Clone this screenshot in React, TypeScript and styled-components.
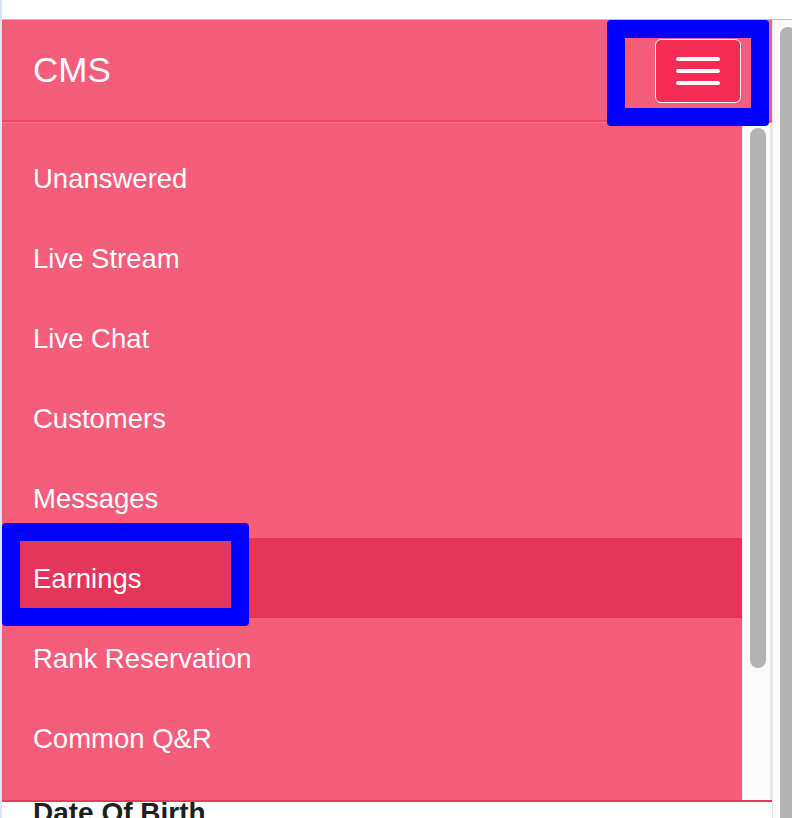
import React, { FC } from 'react'
import styled, { createGlobalStyle } from 'styled-components'

const GlobalStyle = createGlobalStyle`
  html,
  body {
    margin: 0;
    padding: 0;
    overflow: hidden;
    background-color: #fff;
  }

  * {
    box-sizing: border-box;
  }
`

const StylePage = styled.div`
  position: relative;
  display: flex;
  flex-direction: column;
  width: 792px;
  height: 818px;
  overflow: hidden;
  border-left: 2px solid #dce7f0;
  font-family: 'Liberation Sans', Arial, sans-serif;
`

const StyleTopStrip = styled.div`
  flex: none;
  height: 20px;
  background-color: #fff;
  border-bottom: 1px solid #b9c4ce;
`

const StyleBody = styled.div`
  display: flex;
  flex-direction: row;
  flex: 1;
  min-height: 0;
`

const StyleMain = styled.div`
  display: flex;
  flex-direction: column;
  width: 770px;
  flex: none;
`

const StyleHeader = styled.header`
  display: flex;
  flex-direction: row;
  flex: none;
  justify-content: space-between;
  align-items: center;
  height: 102px;
  padding: 0 31px 0 31px;
  background-color: #f55d7b;
  border-bottom: 2px solid #f2436a;
`

const StyleBrand = styled.div`
  margin-top: -1px;
  color: #fff;
  font-size: 35px;
  line-height: 1;
`

const StyleToggler = styled.button`
  display: flex;
  flex-direction: column;
  justify-content: center;
  align-items: center;
  gap: 8px;
  width: 86px;
  height: 64px;
  margin-top: 2px;
  padding: 0;
  background-color: #f42b55;
  border: 1.5px solid #fff;
  border-radius: 6px;
  cursor: pointer;
`

const StyleTogglerBar = styled.span`
  display: block;
  width: 44px;
  height: 4px;
  border-radius: 2px;
  background-color: #fff;
`

const StyleCollapse = styled.div`
  display: flex;
  flex-direction: row;
  flex: none;
  height: 680px;
  background-color: #f55d7b;
  border-top: 1px solid #f8728e;
  border-bottom: 2px solid #f0375d;
`

const StyleMenu = styled.ul`
  flex: 1;
  margin: 0;
  padding: 15px 0 0;
  list-style: none;
`

const StyleMenuItem = styled.li<{ $active?: boolean }>`
  display: flex;
  align-items: center;
  height: 80px;
  padding: 1px 0 0 31px;
  background-color: ${({ $active }) => ($active ? '#e5355a' : 'transparent')};
  color: #fff;
  font-size: 27.5px;
  line-height: 78px;
  white-space: nowrap;
`

const StyleInnerTrack = styled.div`
  flex: none;
  width: 30px;
  padding: 5px 4px 0 7px;
  background-color: #fafafa;
  border-left: 1px solid #ededed;
  border-right: 2px solid #e6e6e6;
`

const StyleInnerThumb = styled.div`
  width: 16px;
  height: 540px;
  border-radius: 8px;
  background-color: #b3b3b3;
`

const StyleContent = styled.div`
  flex: none;
  padding: 1px 0 0 31px;
  background-color: #fff;
`

const StyleLabel = styled.div`
  color: #1f1f1f;
  font-size: 28px;
  font-weight: 700;
  line-height: 20px;
`

const StyleOuterTrack = styled.div`
  flex: none;
  width: 20px;
  padding: 7px 0 0 7px;
  overflow: hidden;
  background-color: #fafafa;
  border-left: 1px solid #e8e8e8;
`

const StyleOuterThumb = styled.div`
  width: 16px;
  height: 900px;
  border-radius: 8px;
  background-color: #b3b3b3;
`

const StyleMark = styled.div<{ $left: number; $top: number; $width: number; $height: number }>`
  position: absolute;
  left: ${({ $left }) => $left}px;
  top: ${({ $top }) => $top}px;
  width: ${({ $width }) => $width}px;
  height: ${({ $height }) => $height}px;
  border: 18px solid #0000ff;
  border-radius: 4px;
  pointer-events: none;
`

const menuItems = [
  'Unanswered',
  'Live Stream',
  'Live Chat',
  'Customers',
  'Messages',
  'Earnings',
  'Rank Reservation',
  'Common Q&R',
]

const App: FC = () => {
  return (
    <>
      <GlobalStyle />
      <StylePage>
        <StyleTopStrip />
        <StyleBody>
          <StyleMain>
            <StyleHeader>
              <StyleBrand>CMS</StyleBrand>
              <StyleToggler aria-label="Toggle navigation">
                <StyleTogglerBar />
                <StyleTogglerBar />
                <StyleTogglerBar />
              </StyleToggler>
            </StyleHeader>
            <StyleCollapse>
              <StyleMenu>
                {menuItems.map((item) => (
                  <StyleMenuItem key={item} $active={item === 'Earnings'}>
                    {item}
                  </StyleMenuItem>
                ))}
              </StyleMenu>
              <StyleInnerTrack>
                <StyleInnerThumb />
              </StyleInnerTrack>
            </StyleCollapse>
            <StyleContent>
              <StyleLabel>Date Of Birth</StyleLabel>
            </StyleContent>
          </StyleMain>
          <StyleOuterTrack>
            <StyleOuterThumb />
          </StyleOuterTrack>
        </StyleBody>
        <StyleMark $left={605} $top={20} $width={162} $height={106} />
        <StyleMark $left={0} $top={523} $width={247} $height={103} />
      </StylePage>
    </>
  )
}

export default App
